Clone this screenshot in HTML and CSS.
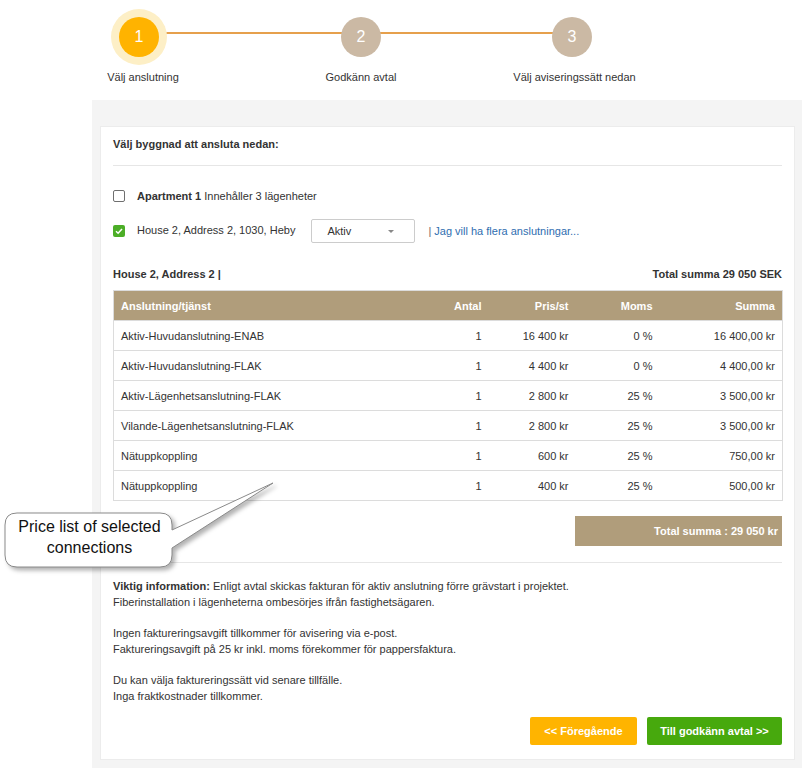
FILE: index.html
```html
<!DOCTYPE html>
<html lang="sv">
<head>
<meta charset="utf-8">
<title>Välj anslutning</title>
<link rel="stylesheet" href="styles.css">
</head>
<body>
<div class="stepper">
  <div class="line"></div>
  <div class="step step1">
    <div class="circle active">1</div>
    <div class="label label1">Välj anslutning</div>
  </div>
  <div class="step step2">
    <div class="circle">2</div>
    <div class="label">Godkänn avtal</div>
  </div>
  <div class="step step3">
    <div class="circle">3</div>
    <div class="label label3">Välj aviseringssätt nedan</div>
  </div>
</div>

<div class="panel">
  <div class="card">
    <div class="title">Välj byggnad att ansluta nedan:</div>
    <div class="divider"></div>

    <div class="bld-row row1">
      <span class="cb"></span>
      <span class="bld-label"><b>Apartment 1</b> Innehåller 3 lägenheter</span>
    </div>
    <div class="bld-row row2">
      <span class="cb checked"><svg width="12" height="12" viewBox="0 0 12 12"><path d="M3 6.2 L5.1 8.2 L9 3.9" fill="none" stroke="#fff" stroke-width="1.5"/></svg></span>
      <span class="bld-label">House 2, Address 2, 1030, Heby</span>
      <span class="select"><span>Aktiv</span><span class="caret"></span></span>
      <span class="more"><span class="pipe">|</span> <a href="#">Jag vill ha flera anslutningar...</a></span>
    </div>

    <div class="sum-head">
      <span>House 2, Address 2 |</span>
      <span>Total summa 29 050 SEK</span>
    </div>

    <table class="price">
      <colgroup>
        <col class="c1"><col class="c2"><col class="c3"><col class="c4"><col class="c5">
      </colgroup>
      <thead>
        <tr><th class="l">Anslutning/tjänst</th><th>Antal</th><th>Pris/st</th><th>Moms</th><th>Summa</th></tr>
      </thead>
      <tbody>
        <tr><td class="l">Aktiv-Huvudanslutning-ENAB</td><td>1</td><td>16 400 kr</td><td>0 %</td><td>16 400,00 kr</td></tr>
        <tr><td class="l">Aktiv-Huvudanslutning-FLAK</td><td>1</td><td>4 400 kr</td><td>0 %</td><td>4 400,00 kr</td></tr>
        <tr><td class="l">Aktiv-Lägenhetsanslutning-FLAK</td><td>1</td><td>2 800 kr</td><td>25 %</td><td>3 500,00 kr</td></tr>
        <tr><td class="l">Vilande-Lägenhetsanslutning-FLAK</td><td>1</td><td>2 800 kr</td><td>25 %</td><td>3 500,00 kr</td></tr>
        <tr><td class="l">Nätuppkoppling</td><td>1</td><td>600 kr</td><td>25 %</td><td>750,00 kr</td></tr>
        <tr><td class="l">Nätuppkoppling</td><td>1</td><td>400 kr</td><td>25 %</td><td>500,00 kr</td></tr>
      </tbody>
    </table>

    <div class="total-wrap"><div class="total">Total summa : 29 050 kr</div></div>
    <div class="divider d2"></div>

    <div class="info">
      <p><b>Viktig information:</b> Enligt avtal skickas fakturan för aktiv anslutning förre grävstart i projektet.<br>Fiberinstallation i lägenheterna ombesörjes ifrån fastighetsägaren.</p>
      <p>Ingen faktureringsavgift tillkommer för avisering via e-post.<br>Faktureringsavgift på 25 kr inkl. moms förekommer för pappersfaktura.</p>
      <p>Du kan välja faktureringssätt vid senare tillfälle.<br>Inga fraktkostnader tillkommer.</p>
    </div>

    <div class="buttons">
      <button class="btn prev">&lt;&lt; Föregående</button>
      <button class="btn next">Till godkänn avtal &gt;&gt;</button>
    </div>
  </div>
</div>

<div class="callout">
  <svg class="bubble" width="290" height="100" viewBox="0 0 290 100">
    <path d="M17 35 H160 Q172 35 172 47 V52 L273 5 L172 70 V77 Q172 89 160 89 H17 Q5 89 5 77 V47 Q5 35 17 35 Z" fill="#fff" stroke="#8a8a8a" stroke-width="1"/>
  </svg>
  <div class="callout-text">Price list of selected<br>connections</div>
</div>
</body>
</html>
```
FILE: styles.css
```css
html { overflow: hidden; }
body {
  margin: 0;
  font-family: "Liberation Sans", Arial, sans-serif;
  font-size: 11px;
  color: #333;
  background: #fff;
  position: relative;
}

/* stepper */
.stepper {
  position: relative;
  height: 100px;
  display: flex;
  padding-left: 59px;
  box-sizing: border-box;
}
.stepper .line {
  position: absolute;
  left: 139px;
  width: 433px;
  top: 32px;
  height: 2px;
  background: #e6a04c;
}
.step {
  width: 160px;
  display: flex;
  flex-direction: column;
  align-items: center;
  padding-top: 17px;
  position: relative;
}
.step2 { margin-left: 62px; }
.step3 { margin-left: 51px; }
.circle {
  width: 40px;
  height: 40px;
  border-radius: 50%;
  background: #cbb9a4;
  color: #fff;
  font-size: 16px;
  line-height: 40px;
  text-align: center;
}
.circle.active {
  background: #ffb300;
  box-shadow: 0 0 0 8px #fdefc6;
}
.label {
  margin-top: 12px;
  line-height: 16px;
  white-space: nowrap;
}
.label1 { margin-left: 8px; }
.label3 { margin-left: 5px; }

/* panel & card */
.panel {
  margin-left: 92px;
  background: #f4f4f4;
  padding: 26px 7px 8px 8px;
}
.card {
  background: #fff;
  border: 1px solid #ececec;
  padding: 9px 12px 14px 12px;
}
.title {
  font-weight: bold;
  line-height: 16px;
}
.divider {
  height: 1px;
  background: #e6e6e6;
  margin-top: 13px;
}
.bld-row {
  display: flex;
  align-items: center;
}
.row1 { margin-top: 22px; height: 16px; }
.row2 { margin-top: 15px; height: 24px; }
.cb {
  width: 12px;
  height: 12px;
  box-sizing: border-box;
  border: 1px solid #6f6f6f;
  border-radius: 2px;
  background: #fff;
  display: inline-block;
  margin-right: 12px;
}
.cb.checked {
  border: none;
  background: #4cae27;
}
.cb svg { display: block; }
.row2 .bld-label { position: relative; top: -1px; }
.select {
  margin-left: 16px;
  width: 104px;
  height: 24px;
  box-sizing: border-box;
  border: 1px solid #cccccc;
  border-radius: 2px;
  display: flex;
  align-items: center;
  justify-content: space-between;
  padding: 0 20px 0 15px;
}
.caret {
  width: 0;
  height: 0;
  border-left: 3px solid transparent;
  border-right: 3px solid transparent;
  border-top: 3px solid #888;
}
.more { margin-left: 13px; }
.pipe { color: #666; }
.more a { color: #2f6eb0; text-decoration: none; }

.sum-head {
  margin-top: 23px;
  display: flex;
  justify-content: space-between;
  font-weight: bold;
  line-height: 16px;
}

/* table */
.price {
  margin-top: 8px;
  width: 100%;
  border-collapse: collapse;
  table-layout: fixed;
  border: 1px solid #dcdcdc;
}
.c1 { width: 305px; }
.c2 { width: 70px; }
.c3 { width: 87px; }
.c4 { width: 84px; }
.c5 { width: 123px; }
.price th {
  background: #b09d7b;
  color: #fff;
  font-weight: bold;
  height: 29px;
  padding: 0 7px;
  text-align: right;
}
.price td {
  height: 29px;
  padding: 0 7px;
  text-align: right;
  border-top: 1px solid #dcdcdc;
}
.price .l { text-align: left; }

.total-wrap {
  display: flex;
  justify-content: flex-end;
  margin-top: 15px;
}
.total {
  width: 207px;
  height: 30px;
  line-height: 30px;
  background: #b09d7b;
  color: #fff;
  font-weight: bold;
  text-align: right;
  padding-right: 4px;
  box-sizing: border-box;
}
.d2 { margin-top: 16px; }

.info { margin-top: 15px; }
.info p {
  margin: 0 0 15px 0;
  line-height: 16px;
}
.info p:last-child { margin-bottom: 0; }

.buttons {
  margin-top: 13px;
  display: flex;
  justify-content: flex-end;
  gap: 10px;
}
.btn {
  height: 28px;
  border: none;
  border-radius: 2px;
  color: #fff;
  font-family: "Liberation Sans", Arial, sans-serif;
  font-size: 11px;
  font-weight: bold;
  padding: 0;
}
.prev { width: 107px; background: #ffb400; }
.next { width: 135px; background: #47a90d; }

/* callout */
.callout {
  position: absolute;
  left: 0;
  top: 478px;
  width: 290px;
  height: 100px;
}
.bubble {
  display: block;
  filter: drop-shadow(3px 3px 2px rgba(0,0,0,0.3));
}
.callout-text {
  position: absolute;
  left: 6px;
  top: 38px;
  width: 167px;
  text-align: center;
  font-size: 16px;
  line-height: 21px;
  color: #111;
}
```
